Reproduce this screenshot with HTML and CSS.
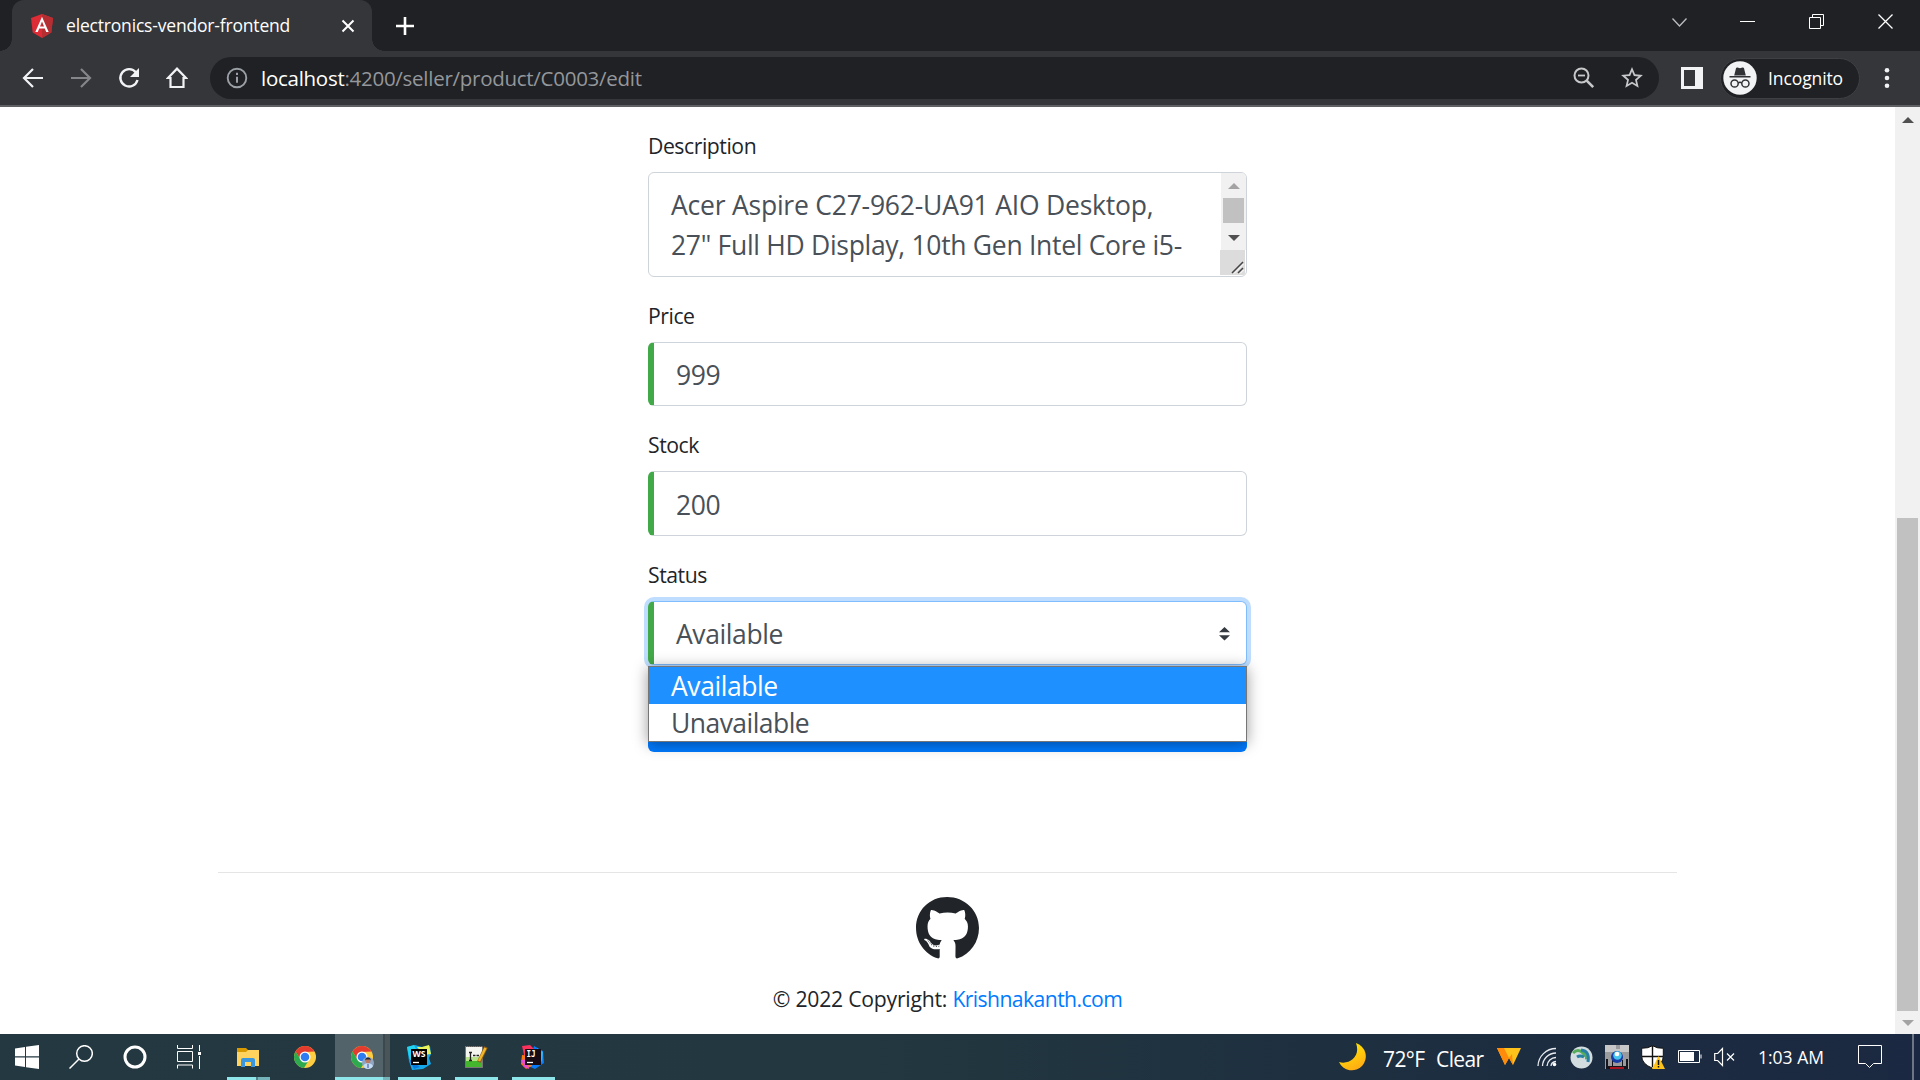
FILE: index.html
```html
<!DOCTYPE html>
<html lang="en">
<head>
<meta charset="utf-8">
<title>electronics-vendor-frontend</title>
<link rel="stylesheet" href="styles.css">
</head>
<body>
<header class="browser">
  <div class="tabstrip">
    <div class="tab">
      <svg class="tab-logo" width="22" height="24" viewBox="0 0 22 24"><path fill="#dd2c35" d="M11 0 22 4 20.3 18.5 11 24 1.700 18.500 0 4z"/><path fill="#b52e31" d="M11 0 22 4 20.300 18.500 11 24z"/><path fill="#fff" fill-rule="evenodd" d="M11 2.700 17.700 18h-2.500l-1.400-3.400H8.200L6.800 18H4.300zM11 7.600 9 12.500h4z"/></svg>
      <span class="tab-title">electronics-vendor-frontend</span>
      <svg class="tab-close" width="14" height="14" viewBox="0 0 14 14"><path d="M1.500 1.500l11 11M12.500 1.500l-11 11" stroke="#fff" stroke-width="2"/></svg>
    </div>
    <svg class="new-tab" width="18" height="18" viewBox="0 0 18 18"><path d="M9 0v18M0 9h18" stroke="#fff" stroke-width="2.600"/></svg>
    <div class="window-buttons">
      <svg width="16" height="16" viewBox="0 0 16 16"><path d="M1.500 4.500l7 7.500 7-7.500" fill="none" stroke="#bdbec0" stroke-width="1.300"/></svg>
      <svg width="16" height="16" viewBox="0 0 16 16"><path d="M0 7.500h15" stroke="#fff"/></svg>
      <svg width="16" height="16" viewBox="0 0 16 16"><path d="M.5 3.500h11v11H.5zM3.500 3.500v-3h11v11h-3" fill="none" stroke="#fff"/></svg>
      <svg width="16" height="16" viewBox="0 0 16 16"><path d="M.5.5l14 14M14.500.5l-14 14" stroke="#fff" stroke-width="1.300"/></svg>
    </div>
  </div>
  <div class="toolbar">
    <div class="nav">
      <svg width="22" height="22" viewBox="0 0 22 22"><path d="M21 11H3M11 2l-9 9 9 9" fill="none" stroke="#f1f3f4" stroke-width="2.200"/></svg>
      <svg width="22" height="22" viewBox="0 0 22 22"><path d="M1 11h18M11 2l9 9-9 9" fill="none" stroke="#85868a" stroke-width="2.200"/></svg>
      <svg width="22" height="22" viewBox="0 0 22 22"><path d="M18 5.500A8.700 8.700 0 1 0 19.500 13" fill="none" stroke="#f1f3f4" stroke-width="2.400"/><path d="M21 1v9h-9z" fill="#f1f3f4"/></svg>
      <svg width="22" height="22" viewBox="0 0 22 22"><path d="M4.500 20V11H2l9-9.300L20 11h-2.500v9z" fill="none" stroke="#f1f3f4" stroke-width="2.200"/></svg>
    </div>
    <div class="address">
      <svg class="info" width="22" height="22" viewBox="0 0 22 22"><circle cx="11" cy="11" r="9.300" fill="none" stroke="#9aa0a6" stroke-width="1.900"/><path d="M11 9.800v6M11 5.800v2.200" stroke="#9aa0a6" stroke-width="2"/></svg>
      <span class="url"><span class="host">localhost</span>:4200/seller/product/C0003/edit</span>
      <svg class="zoom-out" width="22" height="22" viewBox="0 0 22 22"><circle cx="8.500" cy="8.500" r="7" fill="none" stroke="#c6c8ca" stroke-width="2"/><path d="M5 8.500h7" stroke="#c6c8ca" stroke-width="1.800"/><path d="M13.700 13.700l6.500 6.500" stroke="#c6c8ca" stroke-width="2.600"/></svg>
      <svg class="star" width="24" height="24" viewBox="1 1 22 22"><path fill="#c6c8ca" d="M22 9.240l-7.190-.62L12 2 9.190 8.630 2 9.240l5.460 4.730L5.820 21 12 17.270 18.180 21l-1.630-7.030L22 9.240zM12 15.400l-3.760 2.270 1-4.280-3.320-2.880 4.380-.38L12 6.100l1.710 4.040 4.380.38-3.320 2.880 1 4.280L12 15.400z"/></svg>
    </div>
    <svg class="side-panel" width="22" height="22" viewBox="0 0 22 22"><path fill="#f1f3f4" fill-rule="evenodd" d="M0 0h22v22H0zM3 3v16h11V3z"/></svg>
    <div class="incognito">
      <svg width="34" height="34" viewBox="0 0 34 34"><circle cx="17" cy="17" r="16.700" fill="#f1f3f4"/><path fill="#303135" d="M11.200 14.500 13 7.200q.4-1 1.500-.7l2.500.8 2.500-.8q1.100-.3 1.500.7l1.800 7.300z"/><path d="M6.500 15.800h21M15.300 22q1.700-1.300 3.400 0" fill="none" stroke="#303135" stroke-width="1.500"/><g fill="none" stroke="#303135" stroke-width="1.500"><circle cx="11.600" cy="22.500" r="3.600"/><circle cx="22.400" cy="22.500" r="3.600"/></g></svg>
      <span>Incognito</span>
    </div>
    <svg class="menu-dots" width="6" height="22" viewBox="0 0 6 22"><g fill="#f1f3f4"><circle cx="3" cy="3.200" r="2.300"/><circle cx="3" cy="11" r="2.300"/><circle cx="3" cy="18.800" r="2.300"/></g></svg>
  </div>
</header>

<div class="viewport">
  <main class="page">
    <form class="product-form">
      <label>Description</label>
      <div class="textarea">
        <div class="textarea-text">Acer Aspire C27-962-UA91 AIO Desktop,<br><span class="tight">27" Full HD Display, 10th Gen Intel Core i5-</span></div>
        <div class="textarea-side">
          <div class="mini-bar">
            <svg width="12" height="6" viewBox="0 0 12 6"><path d="M0 6 6 0l6 6z" fill="#a3a3a3"/></svg>
            <div class="mini-thumb"></div>
            <svg width="12" height="6" viewBox="0 0 12 6"><path d="M0 0h12L6 6z" fill="#505050"/></svg>
          </div>
          <div class="resizer"><svg width="13" height="13" viewBox="0 0 13 13"><path d="M1 12 12 1M7 12l5-5" stroke="#444" stroke-width="1.500"/><path d="M3 12.500l9.500-9.500M9 12.500l3.500-3.500" stroke="#fff"/></svg></div>
        </div>
      </div>
      <label for="price">Price</label>
      <input class="control" id="price" value="999">
      <label for="stock">Stock</label>
      <input class="control" id="stock" value="200">
      <label>Status</label>
      <div class="select">
        <div class="control focused">
          <span>Available</span>
          <svg width="11" height="14" viewBox="0 0 11 14"><path fill="#343a40" d="M0 5.300 5.500 0 11 5.300zM0 8.300h11L5.500 13.600z"/></svg>
        </div>
        <div class="options">
          <div class="option selected">Available</div>
          <div class="option">Unavailable</div>
        </div>
      </div>
      <div class="submit"></div>
    </form>
    <footer class="footer">
      <svg width="63" height="65" viewBox="0 0 496 512"><path fill="#212529" d="M165.900 397.400c0 2-2.300 3.600-5.200 3.600-3.300.3-5.600-1.300-5.600-3.600 0-2 2.300-3.600 5.200-3.600 3-.3 5.600 1.300 5.600 3.600zm-31.100-4.500c-.7 2 1.300 4.300 4.300 4.900 2.600 1 5.600 0 6.200-2s-1.300-4.300-4.300-5.200c-2.600-.7-5.500.3-6.200 2.300zm44.200-1.700c-2.900.7-4.900 2.600-4.600 4.900.3 2 2.900 3.300 5.900 2.600 2.900-.7 4.900-2.600 4.600-4.600-.3-1.900-3-3.200-5.900-2.900zM244.800 8C106.100 8 0 113.300 0 252c0 110.900 69.800 205.800 169.500 239.200 12.800 2.300 17.300-5.600 17.300-12.100 0-6.200-.3-40.400-.3-61.400 0 0-70 15-84.700-29.800 0 0-11.400-29.100-27.800-36.600 0 0-22.900-15.700 1.600-15.400 0 0 24.900 2 38.600 25.800 21.900 38.600 58.600 27.500 72.900 20.900 2.300-16 8.800-27.100 16-33.700-55.900-6.200-112.300-14.300-112.300-110.500 0-27.500 7.600-41.300 23.600-58.900-2.600-6.500-11.100-33.300 2.600-67.900 20.900-6.500 69 27 69 27 20-5.600 41.500-8.500 62.800-8.500s42.800 2.900 62.800 8.500c0 0 48.100-33.600 69-27 13.700 34.700 5.200 61.400 2.600 67.900 16 17.700 25.800 31.500 25.800 58.900 0 96.500-58.900 104.200-114.800 110.500 9.200 7.900 17 22.900 17 46.400 0 33.700-.3 75.400-.3 83.600 0 6.500 4.600 14.400 17.300 12.100C428.200 457.800 496 362.900 496 252 496 113.300 383.500 8 244.800 8zM97.200 352.900c-1.300 1-1 3.300.7 5.200 1.600 1.600 3.900 2.300 5.200 1 1.300-1 1-3.300-.7-5.200-1.600-1.600-3.900-2.300-5.200-1zm-10.800-8.100c-.7 1.300.3 2.900 2.300 3.900 1.600 1 3.600.7 4.300-.7.7-1.300-.3-2.900-2.300-3.900-2-.6-3.600-.3-4.300.7zm32.400 35.600c-1.600 1.300-1 4.300 1.300 6.200 2.300 2.300 5.200 2.600 6.500 1 1.300-1.300.7-4.300-1.300-6.200-2.200-2.300-5.200-2.600-6.500-1zm-11.400-14.700c-1.600 1-1.600 3.600 0 5.900 1.600 2.300 4.300 3.300 5.600 2.300 1.600-1.300 1.600-3.900 0-6.200-1.400-2.300-4-3.300-5.600-2z"/></svg>
      <p>© 2022 Copyright: <a href="#">Krishnakanth.com</a></p>
    </footer>
  </main>
  <div class="scrollbar">
    <svg width="12" height="6" viewBox="0 0 12 6"><path d="M0 6 6 0l6 6z" fill="#505050"/></svg>
    <div class="scroll-thumb"></div>
    <svg width="12" height="6" viewBox="0 0 12 6"><path d="M0 0h12L6 6z" fill="#a3a3a3"/></svg>
  </div>
</div>

<div class="taskbar">
  <div class="slot system"><svg width="24" height="24" viewBox="0 0 24 24"><path fill="#fff" d="M0 3.500 10 2v9.300H0zM11 1.800 24 0v11.300H11zM0 12.400h10V22L0 20.500zM11 12.400h13V24l-13-1.800z"/></svg></div>
  <div class="slot system"><svg width="24" height="24" viewBox="0 0 24 24"><g fill="none" stroke="#fff" stroke-width="1.500"><circle cx="15.500" cy="8.500" r="7.800"/><path d="M10 14 .5 23.500"/></g></svg></div>
  <div class="slot system"><svg width="24" height="24" viewBox="0 0 24 24"><circle cx="12" cy="12" r="10" fill="none" stroke="#fff" stroke-width="3"/></svg></div>
  <div class="slot system"><svg width="24" height="24" viewBox="0 0 24 24"><path d="M.5 0v3.500h15V0M.5 6.500h15v10H.5zM.5 23.500v-3.500h15v3.500M22.500 0v24" fill="none" stroke="#fff"/><path fill="#fff" stroke="#243841" d="M20.500 6.500h4v4h-4z"/></svg></div>
  <div class="slot app explorer running"><svg width="24" height="24" viewBox="0 0 24 24"><path fill="#d99a00" d="M1 3h9l2 2v4H1z"/><path fill="#ffd35d" d="M1 7h9l2-2h11v16H1z"/><path fill="#3a96dd" d="M5 22v-7q0-2 2-2h10q2 0 2 2v7h-4v-5H9v5z"/></svg></div>
  <div class="slot app"><svg width="24" height="24" viewBox="0 0 24 24"><circle cx="12" cy="12" r="11" fill="#ffcd40"/><path fill="#e33b2e" d="M2.500 6.500A11 11 0 0 1 21.500 6.500L12 7l-4.300 7.500z"/><path fill="#2da94f" d="M2.500 6.500A11 11 0 0 0 11 23l5.300-8.500-8.600 0z"/><circle cx="12" cy="12" r="5.500" fill="#fff"/><circle cx="12" cy="12" r="4.300" fill="#2e7cf0"/></svg></div>
  <div class="slot app active"><svg width="24" height="24" viewBox="0 0 24 24"><circle cx="12" cy="12" r="11" fill="#ffcd40"/><path fill="#e33b2e" d="M2.500 6.500A11 11 0 0 1 21.500 6.500L12 7l-4.300 7.500z"/><path fill="#2da94f" d="M2.500 6.500A11 11 0 0 0 11 23l5.300-8.500-8.600 0z"/><circle cx="12" cy="12" r="5.500" fill="#fff"/><circle cx="12" cy="12" r="4.300" fill="#2e7cf0"/><circle cx="18" cy="18" r="6" fill="#8fa6c4"/><path fill="#c7dcf4" d="M13 21.300q1-3 5-3t5 3A6 6 0 0 1 13 21.300z"/><circle cx="18" cy="15.800" r="2.500" fill="#b97962"/><path fill="#222939" d="M15.200 15.500q0-3 2.800-3t2.800 3l-1-1h-3.600z"/><path stroke="#28539b" d="M18 19v4"/></svg></div>
  <div class="slot app running"><svg width="26" height="26" viewBox="0 0 26 26"><path fill="#14a7ea" d="M1 3 9 1l7 2 8-1 1 8-2 4 2 6-8 5-11 1-3-9z"/><path fill="#23d3ee" d="M1 3 8 1l4 8-8 8z"/><path fill="#e9f35b" d="M11 3l5 0 7-2 2 9-7 1z"/><path fill="#0878dc" d="M3 15l5 10 6-2z"/><path d="M5 5h16v16H5z"/><path d="M7 18.500h6" stroke="#fff" stroke-width="1.300"/><text class="glyph" x="6.500" y="13" textLength="13" lengthAdjust="spacingAndGlyphs">WS</text></svg></div>
  <div class="slot app running"><svg width="24" height="26" viewBox="0 0 24 26"><path fill="#f5f5f2" stroke="#777" d="M1.500 2.500h17v21h-17z"/><path fill="#b7e48b" d="M2 13h16v4H2z"/><path fill="#43b62d" d="M2 17h16v6H2z"/><path fill="none" stroke="#555" stroke-dasharray="1 1" d="M2 2.500h17"/><path d="M6.500 9v7M5 8.500h3M5 16.500h3M9 11.500h2.500M12.500 11.500h2.500" stroke="#222" stroke-width="1.300"/><path d="M22 3l-7 15" stroke="#8b5917" stroke-width="4"/><path d="M21.500 4 15 17" stroke="#f1b629" stroke-width="2.500"/></svg></div>
  <div class="slot app running"><svg width="26" height="26" viewBox="0 0 26 26"><path fill="#087cfa" d="M14 2l9 5 1 12-9 6-7-3z"/><path fill="#fe315d" d="M2 2l8-1 5 5-4 8-9 2 2-5z"/><path fill="#f97a12" d="M2 11l7 1 3 10-6 3-5-5z"/><path fill="#e94bd1" d="M1 16l6-1 2 10-5-2z"/><path fill="#36b9f2" d="M17 4l6 4-1 11z"/><path fill="#170b14" d="M5 5h16v16H5z"/><path d="M7 18.500h6" stroke="#fff" stroke-width="1.300"/><text class="glyph mono" x="6.500" y="13" textLength="9" lengthAdjust="spacingAndGlyphs">IJ</text></svg></div>

  <div class="tray">
    <svg class="moon" width="28" height="28" viewBox="0 0 28 28"><defs><linearGradient id="moon" x2=".5" y2="1"><stop stop-color="#fff200"/><stop offset="1" stop-color="#ffae13"/></linearGradient></defs><path fill="url(#moon)" d="M17 0a14 14 0 1 1-17 19c10 3 22-5 17-19z"/></svg>
    <span class="weather"><span>72°F</span><span>Clear</span></span>
    <svg class="avast" width="24" height="18" viewBox="0 0 24 18"><path fill="#ffc21a" d="M0 0h24l-8 17-4-7-4 7z"/><path fill="#ff8a0c" d="M0 0h7l5 10-4 7zM16 17l-4-7 3-4z"/></svg>
    <svg class="wifi" width="20" height="20" viewBox="0 0 20 20"><g fill="none" stroke="#e8ecf0" stroke-width="1.300"><path d="M1 19A18 18 0 0 1 19 1.500M5.500 19A13.500 13.500 0 0 1 19 6M10 19a9 9 0 0 1 9-8.500M14 19q.3-4 5-4.500"/></g><circle cx="17.500" cy="17.500" r="1.800" fill="#fff"/></svg>
    <svg class="globe" width="23" height="23" viewBox="0 0 23 23"><circle cx="11.500" cy="11.500" r="11" fill="#d3dcdf"/><path fill="none" stroke="#55ad5b" stroke-width="3" d="M3 7q5-5 10 0t2 5"/><path fill="none" stroke="#277fa3" stroke-width="3" d="M11 4q9 1 7 12M14 11q-4-2-7 0"/></svg>
    <svg class="device" width="24" height="24" viewBox="0 0 24 24"><path fill="#9b9b9d" d="M0 0h24v24H0z"/><path fill="#c7c7c7" d="M0 0h11v4h4V0h9v7H0z"/><path fill="#15151d" d="M1 14h2v7h4v-6h1v6h9v-6h1v6h3v-7h2v10H1z"/><path fill="#a81520" d="M5 22h14v2H5z"/><circle cx="12" cy="12" r="6" fill="#173ca6"/><circle cx="12.500" cy="10.500" r="4.300" fill="#48c4ec"/><circle cx="12" cy="9" r="2.300" fill="#fff"/></svg>
    <svg class="shield" width="24" height="24" viewBox="0 0 24 24"><path fill="#fff" stroke="#111" d="M11.500.7q5 3 10.800 2.500v8q0 8-10.800 12Q.7 19 .7 11.200v-8Q7 3.500 11.500.7z"/><path d="M11.500 1v21M1 11.500h21" stroke="#111" stroke-width="1.400"/><path fill="#ffc21a" d="M17.500 11 24 24H11z"/><path d="M17.500 15v5M17.500 21v1.500" stroke="#111" stroke-width="1.500"/></svg>
    <svg class="battery" width="24" height="14" viewBox="0 0 24 14"><path d="M.5.5h21v12H.5zM23 4.500v4" fill="none" stroke="#fff"/><path fill="#fff" d="M2 2h14v9H2z"/></svg>
    <svg class="speaker" width="22" height="20" viewBox="0 0 22 20"><path d="M.7 6.500h3L8.500 1.500v17l-4.800-5h-3zM13 6.500l7 7M20 6.500l-7 7" fill="none" stroke="#fff" stroke-width="1.200"/></svg>
    <span class="clock">1:03 AM</span>
    <svg class="notes" width="24" height="24" viewBox="0 0 24 24"><path d="M.5.5h23v18h-8l-4 4-4-4h-7z" fill="none" stroke="#fff"/></svg>
    <span class="show-desktop"></span>
  </div>
</div>
</body>
</html>
```
FILE: styles.css
```css
* { box-sizing: border-box; }

body {
  margin: 0;
  width: 1920px;
  height: 1080px;
  overflow: hidden;
  display: flex;
  flex-direction: column;
  font-family: "Open Sans", "Noto Sans", sans-serif;
  color: #212529;
  background: #fff;
}

svg { display: block; flex: none; }

/* Browser frame */
.browser {
  flex: none;
  height: 107px;
  background: #35363a;
  border-bottom: 2px solid #5f6064;
}

.tabstrip {
  height: 51px;
  display: flex;
  align-items: center;
  padding-left: 12px;
  background: #202124;
}

.tab {
  position: relative;
  width: 360px;
  height: 51px;
  display: flex;
  align-items: center;
  padding: 0 17px 0 19px;
  background: #35363a;
  border-radius: 12px 12px 0 0;
}

.tab::before,
.tab::after {
  content: "";
  position: absolute;
  bottom: 0;
  width: 12px;
  height: 12px;
}

.tab::before { left: -12px; background: radial-gradient(circle at 0 0, #202124 11.500px, #35363a 12px); }
.tab::after { right: -12px; background: radial-gradient(circle at 100% 0, #202124 11.500px, #35363a 12px); }

.tab-title {
  flex: 1;
  margin: -1px 0 0 13px;
  font-size: 17.500px;
  letter-spacing: -0.18px;
  white-space: nowrap;
  color: #fff;
}

.new-tab { margin-left: 24px; }

.window-buttons {
  margin: -8px 26px 0 auto;
  display: flex;
  gap: 53px;
}

.toolbar {
  height: 54px;
  display: flex;
  align-items: center;
}

.nav {
  display: flex;
  gap: 26px;
  padding-left: 22px;
  width: 210px;
}

.address {
  width: 1449px;
  height: 42px;
  display: flex;
  align-items: center;
  padding: 0 15px 0 16px;
  background: #202124;
  border-radius: 21px;
}

.url {
  flex: 1;
  margin-left: 13px;
  font-size: 20.500px;
  letter-spacing: -0.27px;
  white-space: nowrap;
  color: #94979b;
}

.host { color: #fff; }
.star { margin-left: 25px; }
.side-panel { margin-left: 22px; }

.incognito {
  width: 140px;
  height: 41px;
  margin-left: 17px;
  display: flex;
  align-items: center;
  gap: 11px;
  padding-left: 2px;
  border: 1px solid #3f4044;
  border-radius: 21px;
  background: #202124;
  font-size: 17.500px;
  letter-spacing: -0.1px;
  color: #fff;
}

.incognito span { margin-top: -1px; }

.menu-dots { margin-left: 24px; }

/* Page */
.viewport {
  flex: 1;
  min-height: 0;
  display: flex;
}

.page {
  flex: 1;
  overflow: hidden;
}

.product-form {
  width: 599px;
  margin: 0 auto;
  padding-top: 22px;
  display: flex;
  flex-direction: column;
}

label {
  height: 32px;
  margin-bottom: 11px;
  line-height: 33px;
  font-size: 21.200px;
  letter-spacing: -0.45px;
}

.textarea {
  height: 104.900px;
  margin-bottom: 22px;
  display: flex;
  justify-content: space-between;
  border: 1px solid #ced4da;
  border-radius: 6px;
  overflow: hidden;
}

.textarea-text {
  padding: 12px 0 0 22px;
  font-size: 26.500px;
  line-height: 40px;
  letter-spacing: -0.22px;
  white-space: nowrap;
  color: #495057;
}

.tight { letter-spacing: -0.3px; }

.textarea-side {
  flex: none;
  width: 26px;
}

.mini-bar {
  height: 77px;
  display: flex;
  flex-direction: column;
  align-items: center;
  justify-content: space-between;
  margin-left: 1px;
  padding: 10px 0 9px;
  background: #f1f1f1;
}

.mini-thumb {
  width: 21px;
  height: 25px;
  margin-top: -3px;
  background: #c1c1c1;
}

.resizer {
  width: 25px;
  height: 25px;
  display: flex;
  align-items: flex-end;
  justify-content: flex-end;
  padding: 0 1px 1px 0;
  background: #dcdcdc;
}

.control {
  width: 100%;
  height: 64.500px;
  margin: 0 0 22px;
  padding: 2px 16px 0 22px;
  border: 1px solid #ced4da;
  border-left: 6px solid #42a948;
  border-radius: 6px;
  background: #fff;
  font-family: inherit;
  font-size: 26.500px;
  letter-spacing: -0.4px;
  color: #495057;
}

.select { position: relative; }

.focused {
  display: flex;
  align-items: center;
  justify-content: space-between;
  border-color: #80bdff #80bdff #80bdff #42a948;
  box-shadow: 0 0 0 4px #bfdeff;
}

.options {
  position: absolute;
  top: 65px;
  left: 0;
  width: 599px;
  height: 76px;
  border: 1px solid #767676;
  background: #fff;
  box-shadow: 0 2px 14px rgba(0, 0, 0, 0.4);
}

.option {
  height: 37px;
  padding-left: 22px;
  line-height: 39px;
  font-size: 26.500px;
  letter-spacing: -0.55px;
  color: #495057;
}

.option.selected {
  letter-spacing: -0.42px;
  background: #1e90ff;
  color: #fff;
}

.submit {
  height: 64.500px;
  border-radius: 6px;
  background: #007bff;
}

.footer {
  width: 1459px;
  margin: 120px auto 0;
  padding-top: 23px;
  border-top: 1px solid #e5e5e5;
  display: flex;
  flex-direction: column;
  align-items: center;
}

.footer p {
  margin: 22px 0 0;
  font-size: 21.200px;
  line-height: 32px;
  letter-spacing: -0.24px;
}

.footer a {
  letter-spacing: -0.6px;
  color: #007bff;
  text-decoration: none;
}

.scrollbar {
  flex: none;
  width: 25px;
  display: flex;
  flex-direction: column;
  align-items: center;
  padding-top: 10px;
  background: #f1f1f1;
}

.scroll-thumb {
  width: 21px;
  height: 493px;
  margin: 395px 0 9px;
  background: #c1c1c1;
}

/* Taskbar */
.taskbar {
  flex: none;
  height: 46px;
  display: flex;
  background: linear-gradient(90deg, #243841, #22373f 45%, #1d2e40 75%, #1b2841);
}

.slot {
  display: flex;
  align-items: center;
  justify-content: center;
}

.system { width: 54px; }

.app {
  position: relative;
  width: 57px;
  padding-right: 2px;
}

.explorer { margin-left: 4px; }

.running::after {
  content: "";
  position: absolute;
  left: 7px;
  bottom: 0;
  width: 43px;
  height: 3px;
  background: #8ee5ea;
}

.explorer::after { background: linear-gradient(90deg, #8ee5ea 29px, #4f8288 29px, #4f8288 31px, #73b3b9 31px); }

.active {
  background: linear-gradient(90deg, #243841 1px, #52636a 1px, #52636a 49px, #3b484e 49px, #3b484e 51px, #4a555a 51px, #4a555a 56px, #243841 56px);
}

.active::after {
  content: "";
  position: absolute;
  left: 1px;
  bottom: 0;
  width: 55px;
  height: 3px;
  background: linear-gradient(90deg, #8ee5ea 48px, #73b3b9 48px);
}

.glyph {
  font: bold 9px "Open Sans", sans-serif;
  fill: #fff;
}

.glyph.mono { font-family: "DejaVu Sans Mono", monospace; }

.tray {
  margin-left: auto;
  display: flex;
  align-items: center;
  color: #fff;
}

.weather {
  display: flex;
  width: 102px;
  margin: 4px 0 0 16px;
  font-size: 21px;
  letter-spacing: -0.6px;
}

.weather span:first-child { width: 53px; }
.avast { margin-left: 12px; }
.wifi { margin-left: 16px; }
.globe { margin-left: 13px; }
.device { margin-left: 12px; }
.shield { margin-left: 12px; }
.battery { margin-left: 13px; }
.speaker { margin-left: 12px; }

.clock {
  width: 67px;
  margin-left: 22px;
  font-size: 17.500px;
  letter-spacing: 0;
  white-space: nowrap;
}

.notes { margin-left: 33px; }

.show-desktop {
  width: 2px;
  height: 46px;
  margin: 0 6px 0 30px;
  background: #6c7684;
}
```
